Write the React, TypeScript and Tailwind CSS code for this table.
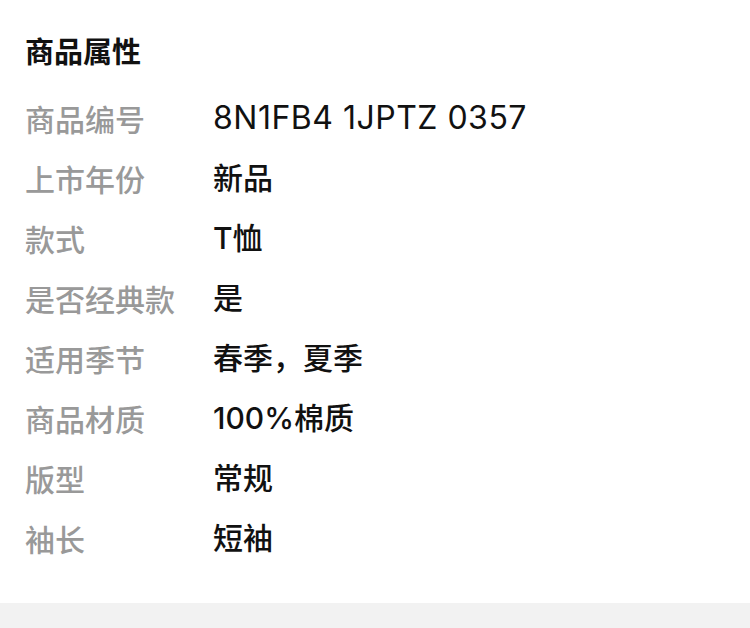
const rows: { label: string; value: string; valueClass?: string }[] = [
  { label: "商品编号", value: "8N1FB4 1JPTZ 0357", valueClass: "text-[32px] font-normal tracking-[0.5px]" },
  { label: "上市年份", value: "新品" },
  { label: "款式", value: "T恤" },
  { label: "是否经典款", value: "是" },
  { label: "适用季节", value: "春季，夏季" },
  { label: "商品材质", value: "100%棉质" },
  { label: "版型", value: "常规" },
  { label: "袖长", value: "短袖" },
];

export default function App() {
  return (
    <div className="w-[750px] h-[628px] bg-white flex flex-col font-['Noto_Sans_CJK_SC',sans-serif]">
      <div className="flex-1 pl-[25px]">
        {/* Title */}
        <div className="mt-[21px] h-[60px] flex items-center text-[29px] font-bold text-[#111]">
          商品属性
        </div>

        {/* Attribute rows */}
        <div className="mt-[7px]">
          {rows.map((row) => (
            <div key={row.label} className="h-[60px] flex items-center text-[30px]">
              <span className="w-[188px] shrink-0 text-[#999] font-medium">{row.label}</span>
              <span
                className={
                  "text-[#111] font-['Inter','Noto_Sans_CJK_SC',sans-serif] " +
                  (row.valueClass ?? "font-medium")
                }
              >
                {row.value}
              </span>
            </div>
          ))}
        </div>
      </div>

      <div className="h-[25px] bg-[#f2f2f2]" />
    </div>
  );
}
